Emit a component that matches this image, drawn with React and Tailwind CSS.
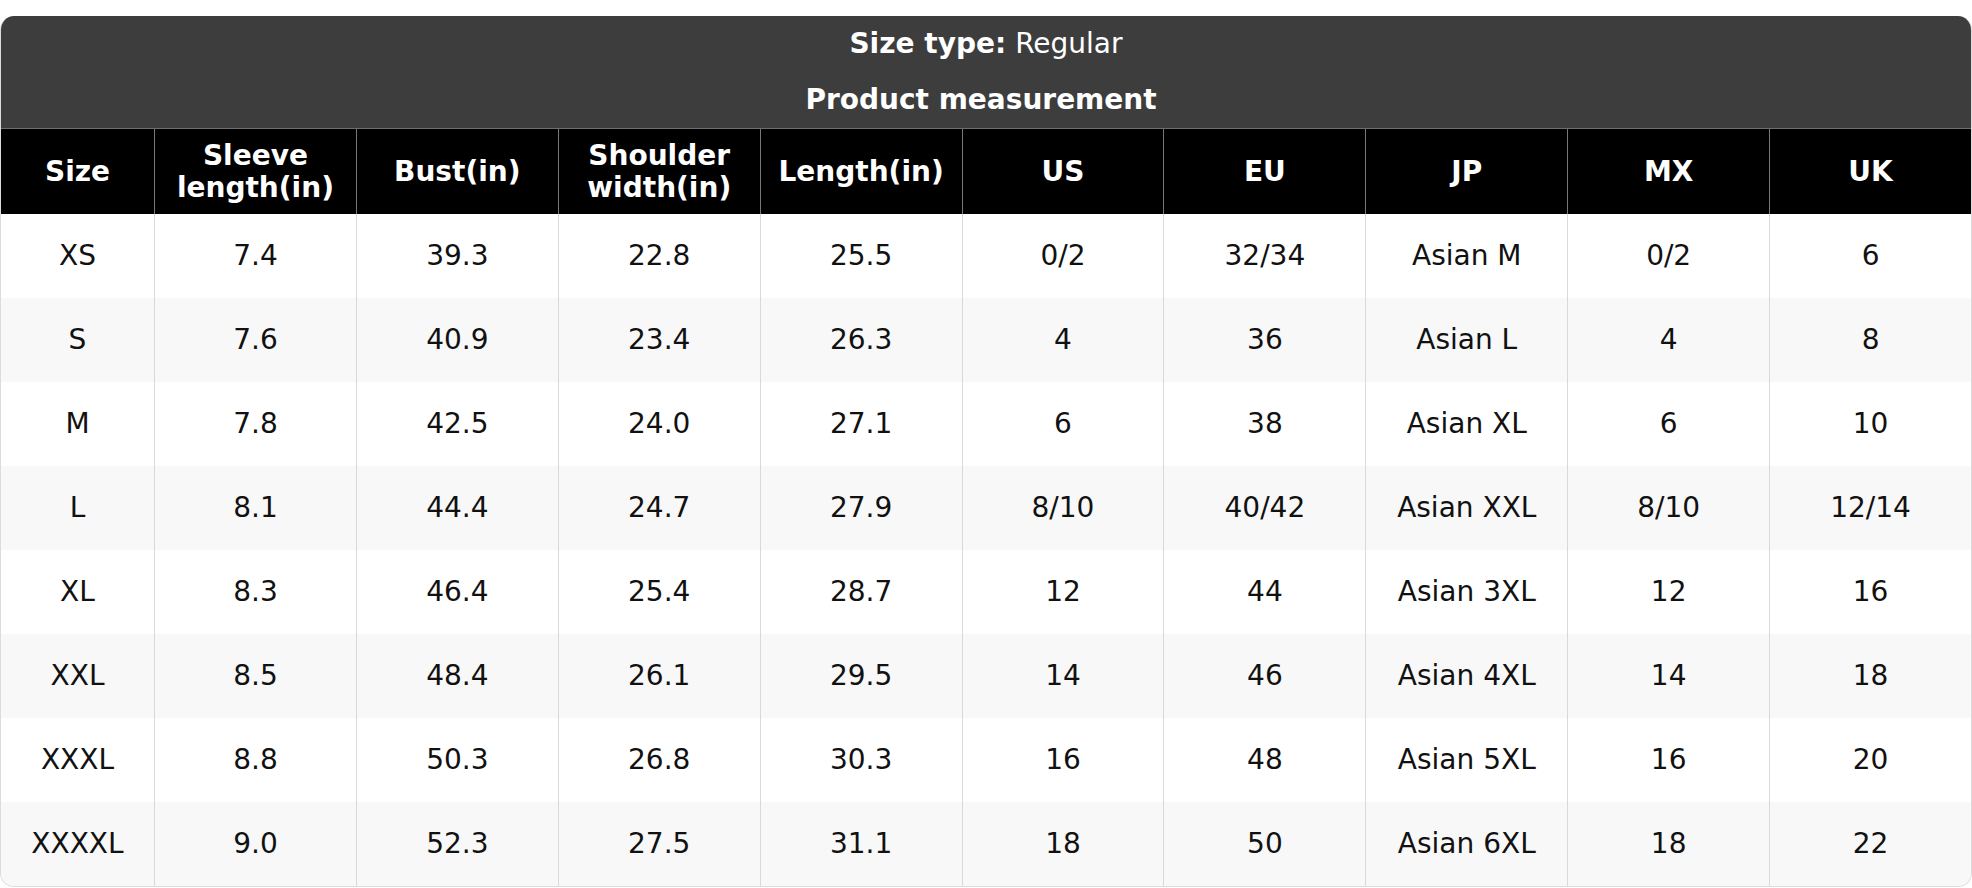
import React from "react";

const headers = [
  ["Size"],
  ["Sleeve", "length(in)"],
  ["Bust(in)"],
  ["Shoulder", "width(in)"],
  ["Length(in)"],
  ["US"],
  ["EU"],
  ["JP"],
  ["MX"],
  ["UK"],
];

const rows = [
  ["XS", "7.4", "39.3", "22.8", "25.5", "0/2", "32/34", "Asian M", "0/2", "6"],
  ["S", "7.6", "40.9", "23.4", "26.3", "4", "36", "Asian L", "4", "8"],
  ["M", "7.8", "42.5", "24.0", "27.1", "6", "38", "Asian XL", "6", "10"],
  ["L", "8.1", "44.4", "24.7", "27.9", "8/10", "40/42", "Asian XXL", "8/10", "12/14"],
  ["XL", "8.3", "46.4", "25.4", "28.7", "12", "44", "Asian 3XL", "12", "16"],
  ["XXL", "8.5", "48.4", "26.1", "29.5", "14", "46", "Asian 4XL", "14", "18"],
  ["XXXL", "8.8", "50.3", "26.8", "30.3", "16", "48", "Asian 5XL", "16", "20"],
  ["XXXXL", "9.0", "52.3", "27.5", "31.1", "18", "50", "Asian 6XL", "18", "22"],
];

export default function App() {
  return (
    <div className="w-[1972px] h-[888px] bg-white pt-[16px]" style={{ fontFamily: '"DejaVu Sans", sans-serif' }}>
      <div className="w-[1972px] rounded-[14px] overflow-hidden border border-[#dcdcdc] border-t-0">
        <div className="bg-[#3d3d3d] text-white text-[28px] flex flex-col items-center">
          <div className="h-[56px] flex items-center">
            <span className="font-bold">Size type:</span>
            <span className="ml-[9px]">Regular</span>
          </div>
          <div className="h-[56px] flex items-center font-bold mr-[10px]">Product measurement</div>
        </div>
        <div className="grid grid-cols-[153px_repeat(9,1fr)] border-t border-[#6e6e6e]">
          {headers.map((h, i) => (
            <div
              key={i}
              className={`bg-black text-white font-bold text-[28px] leading-[32px] h-[85px] flex flex-col items-center justify-center text-center ${i > 0 ? "border-l border-[#777777]" : ""}`}
            >
              {h.map((line, j) => (
                <span key={j}>{line}</span>
              ))}
            </div>
          ))}
          {rows.map((r, ri) =>
            r.map((c, ci) => (
              <div
                key={`${ri}-${ci}`}
                className={`h-[84px] flex items-center justify-center text-[28px] text-[#111111] ${ri % 2 === 1 ? "bg-[#f8f8f8]" : "bg-white"} ${ci > 0 ? "border-l border-[#d9d9d9]" : ""}`}
              >
                {c}
              </div>
            ))
          )}
        </div>
      </div>
    </div>
  );
}
